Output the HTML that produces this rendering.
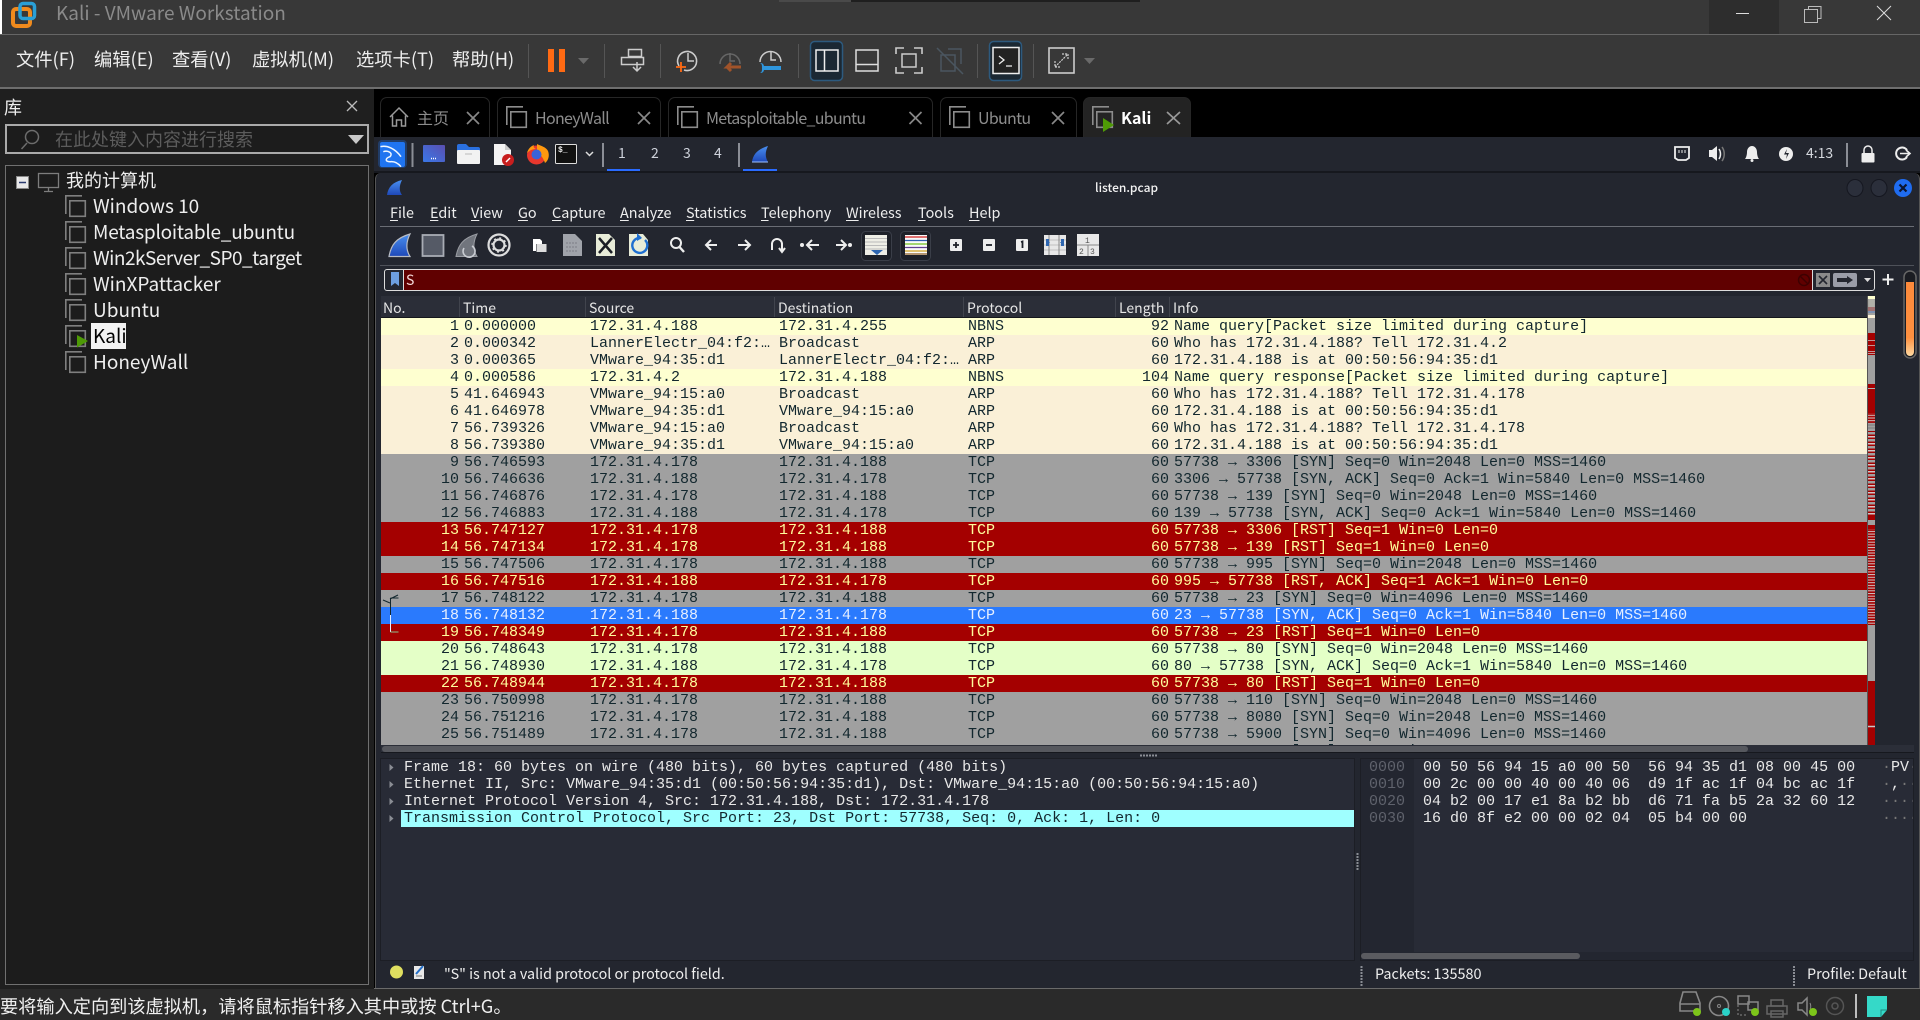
<!DOCTYPE html>
<html><head><meta charset="utf-8"><title>Kali - VMware Workstation</title>
<style>
*{box-sizing:border-box;margin:0;padding:0}
html,body{width:1920px;height:1020px;overflow:hidden;background:#000}
body{position:relative;font-family:"Noto Sans CJK SC","Liberation Sans",sans-serif;color:#eee}
.a{position:absolute}
.t{position:absolute;white-space:nowrap;line-height:1}
#ov{position:absolute;left:0;top:0;z-index:5;pointer-events:none}
.m{font-family:"Liberation Mono",monospace;font-size:15px}
#rows{position:absolute;left:381px;top:318px;width:1486px;height:427px;overflow:hidden;font-family:"Liberation Mono",monospace;font-size:15px;line-height:17px}
.r{position:relative;height:17px;white-space:pre;color:#12272e}
.r span{position:absolute;top:0}
.r span:nth-child(1){right:1408px}
.r span:nth-child(2){left:83px}
.r span:nth-child(3){left:209px}
.r span:nth-child(4){left:398px}
.r span:nth-child(5){left:587px}
.r span:nth-child(6){right:698px}
.r span:nth-child(7){left:793px}
.y{background:#feffd0}.b{background:#faf0d7}.g{background:#a0a0a0}
.d{background:#a40000;color:#fffc9c}.s{background:#2a7afd;color:#e6efff}.l{background:#e4ffc7}
.mi{font-size:14.4px;top:206px;color:#eee}
.mi u{text-decoration-thickness:1px;text-underline-offset:2px}
.hd{font-size:14px;top:301px;color:#e6e6e6}
.dl{position:absolute;left:404px;font-family:"Liberation Mono",monospace;font-size:15px;line-height:17px;color:#e8e8e8;white-space:pre}
.hx{position:absolute;font-family:"Liberation Mono",monospace;font-size:15px;line-height:17px;white-space:pre;color:#e8e8e8}
.tree{font-size:19px;color:#eee}
.menu{font-size:18.3px;top:50px;color:#eee}
.tb{position:absolute;top:97px;height:40px;border:1px solid #262626;border-bottom:none;border-radius:7px 7px 0 0;background:#000}
.tl{font-size:16px;top:109px;color:#8c8c8c;letter-spacing:-.7px}
</style></head><body>

<!-- VMware chrome -->
<div class="a" style="left:0;top:0;width:1920px;height:34px;background:#383838"></div>
<div class="a" style="left:0;top:0;width:2px;height:34px;background:#fff"></div>
<div class="a" style="left:779px;top:0;width:361px;height:2px;background:#1f1f1f"></div>
<div class="a" style="left:779px;top:0;width:72px;height:2px;background:#4a4a4a"></div>
<div class="a" style="left:1709px;top:0;width:70px;height:34px;background:#2d2d2d"></div>
<div class="a" style="left:0;top:34px;width:1920px;height:1px;background:#666"></div>
<div class="a" style="left:0;top:35px;width:1920px;height:52px;background:#383838"></div>
<div class="a" style="left:0;top:87px;width:1920px;height:2px;background:#6e6e6e"></div>
<div class="t" style="left:56px;top:3px;font-size:19px;color:#8a8a8a">Kali - VMware Workstation</div>
<div class="t menu" style="left:16px">文件(F)</div>
<div class="t menu" style="left:94px">编辑(E)</div>
<div class="t menu" style="left:172px">查看(V)</div>
<div class="t menu" style="left:252px">虚拟机(M)</div>
<div class="t menu" style="left:356px">选项卡(T)</div>
<div class="t menu" style="left:452px">帮助(H)</div>

<!-- Left library -->
<div class="a" style="left:0;top:89px;width:374px;height:900px;background:#1f1f1f"></div>
<div class="t" style="left:4px;top:98px;font-size:18px;color:#eee">库</div>
<div class="a" style="left:5px;top:124px;width:364px;height:30px;border:2px solid #aaa;background:#1c1c1c"></div>
<div class="t" style="left:55px;top:130px;font-size:18px;color:#5c5c5c">在此处键入内容进行搜索</div>
<div class="a" style="left:5px;top:165px;width:364px;height:820px;border:1px solid #707070;background:#1c1c1c"></div>
<div class="t tree" style="left:66px;top:171px;font-size:18px">我的计算机</div>
<div class="t tree" style="left:93px;top:196px">Windows 10</div>
<div class="t tree" style="left:93px;top:222px;letter-spacing:-.23px">Metasploitable_ubuntu</div>
<div class="t tree" style="left:93px;top:248px;letter-spacing:-.5px">Win2kServer_SP0_target</div>
<div class="t tree" style="left:93px;top:274px">WinXPattacker</div>
<div class="t tree" style="left:93px;top:300px">Ubuntu</div>
<div class="a" style="left:91px;top:323px;width:35px;height:26px;background:#f2f2f2"></div>
<div class="t tree" style="left:93px;top:326px;color:#000">Kali</div>
<div class="t tree" style="left:93px;top:352px">HoneyWall</div>

<!-- Tabs -->
<div class="tb" style="left:380px;width:110px"></div>
<div class="tb" style="left:497px;width:164px"></div>
<div class="tb" style="left:668px;width:265px"></div>
<div class="tb" style="left:940px;width:137px"></div>
<div class="tb" style="left:1083px;width:108px;background:#232323"></div>
<div class="t tl" style="left:417px;letter-spacing:0">主页</div>
<div class="t tl" style="left:535px">HoneyWall</div>
<div class="t tl" style="left:706px">Metasploitable_ubuntu</div>
<div class="t tl" style="left:978px">Ubuntu</div>
<div class="t tl" style="left:1121px;color:#fff;font-weight:700;letter-spacing:0">Kali</div>

<!-- Kali panel -->
<div class="a" style="left:374px;top:137px;width:1546px;height:36px;background:#23262f"></div>
<div class="a" style="left:374px;top:171px;width:1546px;height:2px;background:#16181e"></div>
<div class="a" style="left:607px;top:169px;width:33px;height:2px;background:#2a6bff"></div>
<div class="a" style="left:743px;top:169px;width:34px;height:2px;background:#2a6bff"></div>
<div class="t" style="left:618px;top:146px;font-size:14px;color:#cfd3dc">1</div>
<div class="t" style="left:651px;top:146px;font-size:14px;color:#cfd3dc">2</div>
<div class="t" style="left:683px;top:146px;font-size:14px;color:#cfd3dc">3</div>
<div class="t" style="left:714px;top:146px;font-size:14px;color:#cfd3dc">4</div>
<div class="t" style="left:1806px;top:146px;font-size:14px;color:#d5d8de">4:13</div>

<!-- Wireshark window -->
<div class="a" style="left:375px;top:173px;width:1545px;height:816px;background:#23262f;border:1px solid #555;border-top:none;border-radius:6px 6px 0 0"></div>
<div class="t" style="left:1095px;top:182px;font-size:12px;color:#f2f2f2;font-weight:500">listen.pcap</div>
<div class="a" style="left:380px;top:226px;width:1534px;height:1px;background:#6a6d75"></div>
<div class="a" style="left:380px;top:265px;width:1534px;height:1px;background:#4e5159"></div>
<div class="t mi" style="left:390px"><u>F</u>ile</div>
<div class="t mi" style="left:430px"><u>E</u>dit</div>
<div class="t mi" style="left:471px"><u>V</u>iew</div>
<div class="t mi" style="left:518px"><u>G</u>o</div>
<div class="t mi" style="left:552px"><u>C</u>apture</div>
<div class="t mi" style="left:620px"><u>A</u>nalyze</div>
<div class="t mi" style="left:686px"><u>S</u>tatistics</div>
<div class="t mi" style="left:761px"><u>T</u>elephony</div>
<div class="t mi" style="left:846px"><u>W</u>ireless</div>
<div class="t mi" style="left:918px"><u>T</u>ools</div>
<div class="t mi" style="left:969px"><u>H</u>elp</div>

<!-- Filter -->
<div class="a" style="left:384px;top:269px;width:1491px;height:22px;border:1px solid #ddd;border-radius:3px;background:#23262f"></div>
<div class="a" style="left:403px;top:270px;width:1410px;height:20px;background:#600000;border-left:1px solid #ddd;border-right:1px solid #ddd"></div>
<div class="t" style="left:406px;top:273px;font-size:14px;color:#f5dada">S</div>

<!-- Packet list header -->
<div class="a" style="left:381px;top:296px;width:1486px;height:22px;background:#2b2e38"></div>
<div class="a" style="left:381px;top:317px;width:1486px;height:1px;background:#15171c"></div>
<div class="a" style="left:459px;top:297px;width:1px;height:20px;background:#41444d"></div>
<div class="a" style="left:585px;top:297px;width:1px;height:20px;background:#41444d"></div>
<div class="a" style="left:774px;top:297px;width:1px;height:20px;background:#41444d"></div>
<div class="a" style="left:963px;top:297px;width:1px;height:20px;background:#41444d"></div>
<div class="a" style="left:1115px;top:297px;width:1px;height:20px;background:#41444d"></div>
<div class="a" style="left:1169px;top:297px;width:1px;height:20px;background:#41444d"></div>
<div class="t hd" style="left:383px">No.</div>
<div class="t hd" style="left:463px">Time</div>
<div class="t hd" style="left:589px">Source</div>
<div class="t hd" style="left:778px">Destination</div>
<div class="t hd" style="left:967px">Protocol</div>
<div class="t hd" style="left:1119px">Length</div>
<div class="t hd" style="left:1173px">Info</div>

<div id="rows">
<div class="r y"><span>1</span><span>0.000000</span><span>172.31.4.188</span><span>172.31.4.255</span><span>NBNS</span><span>92</span><span>Name query[Packet size limited during capture]</span></div>
<div class="r b"><span>2</span><span>0.000342</span><span>LannerElectr_04:f2:…</span><span>Broadcast</span><span>ARP</span><span>60</span><span>Who has 172.31.4.188? Tell 172.31.4.2</span></div>
<div class="r b"><span>3</span><span>0.000365</span><span>VMware_94:35:d1</span><span>LannerElectr_04:f2:…</span><span>ARP</span><span>60</span><span>172.31.4.188 is at 00:50:56:94:35:d1</span></div>
<div class="r y"><span>4</span><span>0.000586</span><span>172.31.4.2</span><span>172.31.4.188</span><span>NBNS</span><span>104</span><span>Name query response[Packet size limited during capture]</span></div>
<div class="r b"><span>5</span><span>41.646943</span><span>VMware_94:15:a0</span><span>Broadcast</span><span>ARP</span><span>60</span><span>Who has 172.31.4.188? Tell 172.31.4.178</span></div>
<div class="r b"><span>6</span><span>41.646978</span><span>VMware_94:35:d1</span><span>VMware_94:15:a0</span><span>ARP</span><span>60</span><span>172.31.4.188 is at 00:50:56:94:35:d1</span></div>
<div class="r b"><span>7</span><span>56.739326</span><span>VMware_94:15:a0</span><span>Broadcast</span><span>ARP</span><span>60</span><span>Who has 172.31.4.188? Tell 172.31.4.178</span></div>
<div class="r b"><span>8</span><span>56.739380</span><span>VMware_94:35:d1</span><span>VMware_94:15:a0</span><span>ARP</span><span>60</span><span>172.31.4.188 is at 00:50:56:94:35:d1</span></div>
<div class="r g"><span>9</span><span>56.746593</span><span>172.31.4.178</span><span>172.31.4.188</span><span>TCP</span><span>60</span><span>57738 → 3306 [SYN] Seq=0 Win=2048 Len=0 MSS=1460</span></div>
<div class="r g"><span>10</span><span>56.746636</span><span>172.31.4.188</span><span>172.31.4.178</span><span>TCP</span><span>60</span><span>3306 → 57738 [SYN, ACK] Seq=0 Ack=1 Win=5840 Len=0 MSS=1460</span></div>
<div class="r g"><span>11</span><span>56.746876</span><span>172.31.4.178</span><span>172.31.4.188</span><span>TCP</span><span>60</span><span>57738 → 139 [SYN] Seq=0 Win=2048 Len=0 MSS=1460</span></div>
<div class="r g"><span>12</span><span>56.746883</span><span>172.31.4.188</span><span>172.31.4.178</span><span>TCP</span><span>60</span><span>139 → 57738 [SYN, ACK] Seq=0 Ack=1 Win=5840 Len=0 MSS=1460</span></div>
<div class="r d"><span>13</span><span>56.747127</span><span>172.31.4.178</span><span>172.31.4.188</span><span>TCP</span><span>60</span><span>57738 → 3306 [RST] Seq=1 Win=0 Len=0</span></div>
<div class="r d"><span>14</span><span>56.747134</span><span>172.31.4.178</span><span>172.31.4.188</span><span>TCP</span><span>60</span><span>57738 → 139 [RST] Seq=1 Win=0 Len=0</span></div>
<div class="r g"><span>15</span><span>56.747506</span><span>172.31.4.178</span><span>172.31.4.188</span><span>TCP</span><span>60</span><span>57738 → 995 [SYN] Seq=0 Win=2048 Len=0 MSS=1460</span></div>
<div class="r d"><span>16</span><span>56.747516</span><span>172.31.4.188</span><span>172.31.4.178</span><span>TCP</span><span>60</span><span>995 → 57738 [RST, ACK] Seq=1 Ack=1 Win=0 Len=0</span></div>
<div class="r g"><span>17</span><span>56.748122</span><span>172.31.4.178</span><span>172.31.4.188</span><span>TCP</span><span>60</span><span>57738 → 23 [SYN] Seq=0 Win=4096 Len=0 MSS=1460</span></div>
<div class="r s"><span>18</span><span>56.748132</span><span>172.31.4.188</span><span>172.31.4.178</span><span>TCP</span><span>60</span><span>23 → 57738 [SYN, ACK] Seq=0 Ack=1 Win=5840 Len=0 MSS=1460</span></div>
<div class="r d"><span>19</span><span>56.748349</span><span>172.31.4.178</span><span>172.31.4.188</span><span>TCP</span><span>60</span><span>57738 → 23 [RST] Seq=1 Win=0 Len=0</span></div>
<div class="r l"><span>20</span><span>56.748643</span><span>172.31.4.178</span><span>172.31.4.188</span><span>TCP</span><span>60</span><span>57738 → 80 [SYN] Seq=0 Win=2048 Len=0 MSS=1460</span></div>
<div class="r l"><span>21</span><span>56.748930</span><span>172.31.4.188</span><span>172.31.4.178</span><span>TCP</span><span>60</span><span>80 → 57738 [SYN, ACK] Seq=0 Ack=1 Win=5840 Len=0 MSS=1460</span></div>
<div class="r d"><span>22</span><span>56.748944</span><span>172.31.4.178</span><span>172.31.4.188</span><span>TCP</span><span>60</span><span>57738 → 80 [RST] Seq=1 Win=0 Len=0</span></div>
<div class="r g"><span>23</span><span>56.750998</span><span>172.31.4.178</span><span>172.31.4.188</span><span>TCP</span><span>60</span><span>57738 → 110 [SYN] Seq=0 Win=2048 Len=0 MSS=1460</span></div>
<div class="r g"><span>24</span><span>56.751216</span><span>172.31.4.178</span><span>172.31.4.188</span><span>TCP</span><span>60</span><span>57738 → 8080 [SYN] Seq=0 Win=2048 Len=0 MSS=1460</span></div>
<div class="r g"><span>25</span><span>56.751489</span><span>172.31.4.178</span><span>172.31.4.188</span><span>TCP</span><span>60</span><span>57738 → 5900 [SYN] Seq=0 Win=4096 Len=0 MSS=1460</span></div>
<div class="r g"><span>26</span><span>56.751497</span><span>172.31.4.188</span><span>172.31.4.178</span><span>TCP</span><span>60</span><span>57738 → 5900 [SYN] Seq=0 Win=4096 Len=0 MSS=1460</span></div>
</div>

<!-- H-scroll + splitter -->
<div class="a" style="left:381px;top:745px;width:1533px;height:7px;background:#2b2e38"></div>
<div class="a" style="left:382px;top:746px;width:1366px;height:6px;border-radius:3px;background:#56585e"></div>
<div class="a" style="left:381px;top:752px;width:1533px;height:1px;background:#16181e"></div>

<!-- Details -->
<div class="a" style="left:380px;top:758px;width:975px;height:203px;background:#282b36;border:1px solid #1c1e25"></div>
<div class="a" style="left:401px;top:810px;width:953px;height:17px;background:#9fffff"></div>
<div class="dl" style="top:759px">Frame 18: 60 bytes on wire (480 bits), 60 bytes captured (480 bits)</div>
<div class="dl" style="top:776px">Ethernet II, Src: VMware_94:35:d1 (00:50:56:94:35:d1), Dst: VMware_94:15:a0 (00:50:56:94:15:a0)</div>
<div class="dl" style="top:793px">Internet Protocol Version 4, Src: 172.31.4.188, Dst: 172.31.4.178</div>
<div class="dl" style="top:810px;color:#12272e">Transmission Control Protocol, Src Port: 23, Dst Port: 57738, Seq: 0, Ack: 1, Len: 0</div>

<!-- Hex -->
<div class="a" style="left:1360px;top:758px;width:554px;height:203px;background:#282b36;border:1px solid #1c1e25;overflow:hidden"></div>
<div class="a" style="left:1361px;top:759px;width:53px;height:193px;background:#232630"></div>
<div class="a" style="left:1361px;top:952px;width:552px;height:8px;background:#232630"></div>
<div class="a" style="left:1361px;top:953px;width:219px;height:6px;border-radius:3px;background:#5a5b60"></div>
<div class="hx" style="left:1369px;top:759px;color:#5f626c">0000
0010
0020
0030</div>
<div class="hx" style="left:1423px;top:759px">00 50 56 94 15 a0 00 50  56 94 35 d1 08 00 45 00
00 2c 00 00 40 00 40 06  d9 1f ac 1f 04 bc ac 1f
04 b2 00 17 e1 8a b2 bb  d6 71 fa b5 2a 32 60 12
16 d0 8f e2 00 00 02 04  05 b4 00 00</div>
<div class="a" style="left:1882px;top:759px;width:31px;height:70px;overflow:hidden"><div class="hx" style="left:0;top:0"><span style="color:#777">·</span>PV<span style="color:#777">·</span>
<span style="color:#777">·</span>,<span style="color:#777">··</span>
<span style="color:#777">····</span>
<span style="color:#777">····</span></div></div>

<!-- WS status -->
<div class="t" style="left:444px;top:967px;font-size:14.3px;color:#eee">"S" is not a valid protocol or protocol field.</div>
<div class="t" style="left:1375px;top:967px;font-size:14.4px;color:#eee">Packets: 135580</div>
<div class="t" style="left:1807px;top:967px;font-size:14.4px;color:#eee">Profile: Default</div>

<!-- Bottom status -->
<div class="a" style="left:0;top:989px;width:1920px;height:31px;background:#2a2a2a"></div>
<div class="a" style="left:374px;top:988px;width:1546px;height:1px;background:#6a6a6a"></div>
<div class="t" style="left:0;top:997px;font-size:18.2px;color:#f0f0f0">要将输入定向到该虚拟机，请将鼠标指针移入其中或按 Ctrl+G。</div>

<svg id="ov" width="1920" height="1020" viewBox="0 0 1920 1020" fill="none">
<defs>
<g id="vm" stroke-width="1.6"><path d="M0.8 19V0.8H17" /><rect x="4.8" y="5.8" width="15.5" height="15.5"/></g>
<pattern id="st" width="7" height="2.7" patternUnits="userSpaceOnUse"><rect width="7" height="2.7" fill="#a40000"/><rect y="0" width="7" height="1" fill="#d0c8c8"/></pattern>
<pattern id="st2" width="7" height="7" patternUnits="userSpaceOnUse"><rect width="7" height="7" fill="#a40000"/><rect y="0" width="7" height="1.5" fill="#d0c8c8"/><rect y="3" width="7" height="2.5" fill="#a0a0a0"/></pattern>
<linearGradient id="fin" x1="0" y1="0" x2="0" y2="1"><stop offset="0" stop-color="#4a90f0"/><stop offset="1" stop-color="#1e48b8"/></linearGradient>
<linearGradient id="org" x1="0" y1="0" x2="0" y2="1"><stop offset="0" stop-color="#fd8a3b"/><stop offset=".75" stop-color="#fe9040"/><stop offset="1" stop-color="#ffd9a0"/></linearGradient>
<linearGradient id="pur" x1="1" y1="0" x2="0" y2="1"><stop offset="0" stop-color="#5a4fb0"/><stop offset="1" stop-color="#3a78e8"/></linearGradient>
</defs>

<!-- VMware logo -->
<rect x="13" y="9" width="17" height="17" rx="3" stroke="#f08a1d" stroke-width="4"/>
<rect x="20" y="3.500" width="14.500" height="15" rx="3" stroke="#2a9fd6" stroke-width="3.500"/>
<!-- window controls -->
<path d="M1736 13.500h13" stroke="#ddd"/>
<rect x="1804.500" y="9.500" width="13" height="13" stroke="#bbb"/><path d="M1808.500 9V6.500h12.500V18.500h-3" stroke="#bbb"/>
<path d="M1877 6l14 14M1891 6l-14 14" stroke="#ddd"/>

<!-- VMware toolbar -->
<path d="M528.500 44v34M604.500 44v34M660.500 44v34M798.500 44v34M977.500 44v34M1033.500 44v34" stroke="#555"/>
<rect x="548" y="49" width="6" height="23" fill="#ff6a13"/><rect x="559" y="49" width="6" height="23" fill="#ff6a13"/>
<path d="M578 58h11l-5.500 6z" fill="#6a6a6a"/>
<rect x="628.500" y="49.500" width="13" height="7" stroke="#ccc" stroke-width="1.500"/><rect x="621.500" y="57.500" width="22" height="7" stroke="#ccc" stroke-width="1.500"/>
<path d="M637 62v9m-4-4l4 4 4-4" stroke="#ccc" stroke-width="1.500"/>
<path d="M679 66a9.500 9.500 0 1 1 5 4" stroke="#ccc" stroke-width="1.600"/><path d="M688 53v8h6" stroke="#ccc" stroke-width="1.500"/><path d="M676 67h10M681 62v10" stroke="#ff6a13" stroke-width="1.800"/>
<path d="M720 64a10 10 0 1 1 20 0" stroke="#666" stroke-width="1.500"/><path d="M730 53v8h5" stroke="#666" stroke-width="1.500"/><path d="M741 67h-14l4-4m-4 4l4 4" stroke="#a0532a" stroke-width="3"/>
<path d="M760 62a10.500 10.500 0 1 1 21 0" stroke="#ccc" stroke-width="1.500"/><path d="M771 52v8h5" stroke="#ccc" stroke-width="1.500"/><path d="M760 63a3.500 3.500 0 0 1 4 3h17v4h-17a3.500 3.500 0 0 1-4 3c2-1 2-2 2-5s0-4-2-5z" fill="#2f96dd"/>
<rect x="810.500" y="41.500" width="32" height="39" rx="4" fill="#1b2833" stroke="#2d5a7e" stroke-width="1.500"/>
<rect x="816" y="50" width="22" height="21" stroke="#eee" stroke-width="1.500"/><path d="M824.500 50v21" stroke="#eee" stroke-width="1.500"/>
<rect x="856" y="50" width="22" height="21" stroke="#ddd" stroke-width="1.500"/><path d="M856 64.500h22" stroke="#ddd" stroke-width="1.500"/>
<path d="M896 54v-6h8M914 48h8v6M922 67v6h-8M904 73h-8v-6" stroke="#ccc" stroke-width="1.600"/><rect x="902" y="54" width="14" height="13" stroke="#ccc" stroke-width="1.500"/>
<path d="M937 48l26 26" stroke="#4a5660" stroke-width="1.500"/><rect x="941" y="55" width="14" height="16" stroke="#4a5660" stroke-width="1.500"/><path d="M948 49h13v15" stroke="#4a5660" stroke-width="1.500"/>
<rect x="989.500" y="41.500" width="32" height="39" rx="4" fill="#1b2833" stroke="#2d5a7e" stroke-width="1.500"/>
<rect x="993" y="47.500" width="26" height="26" fill="#222" stroke="#eee" stroke-width="1.500"/><path d="M999 56l5 4-5 4M1006 66h6" stroke="#eee" stroke-width="1.300"/>
<rect x="1049" y="48" width="25" height="25" stroke="#ccc" stroke-width="1.600"/><path d="M1055 67l13-13M1062 54h6v6M1055 61v6h6" stroke="#ccc" stroke-width="1.200" stroke-dasharray="2 1"/>
<path d="M1084 58h11l-5.500 6z" fill="#6a6a6a"/>

<!-- library close, search -->
<path d="M347 101l10 10M357 101l-10 10" stroke="#bbb" stroke-width="1.300"/>
<circle cx="32" cy="137" r="6.500" stroke="#6d6d6d" stroke-width="1.500"/><path d="M27 143l-5.500 6" stroke="#6d6d6d" stroke-width="1.500"/>
<path d="M348 135h16l-8 9z" fill="#c8c8c8"/>
<rect x="16.500" y="176.500" width="12" height="12" fill="#e8e8e8" stroke="#888"/><path d="M19 182.500h7" stroke="#2a3a6e" stroke-width="1.500"/>
<rect x="38.500" y="173.500" width="20" height="14" stroke="#7d7d7d" stroke-width="1.300"/><path d="M48.500 188v3M44 191.500h9" stroke="#7d7d7d" stroke-width="1.300"/>
<!-- tree icons -->
<use href="#vm" x="65" y="195" stroke="#7f7f7f"/><use href="#vm" x="65" y="221" stroke="#7f7f7f"/>
<use href="#vm" x="65" y="247" stroke="#7f7f7f"/><use href="#vm" x="65" y="273" stroke="#7f7f7f"/>
<use href="#vm" x="65" y="299" stroke="#7f7f7f"/><use href="#vm" x="65" y="325" stroke="#7f7f7f"/>
<use href="#vm" x="65" y="351" stroke="#7f7f7f"/>
<path d="M77 335l11 6-11 6.500z" fill="#4e9a06"/>

<!-- tab icons -->
<path d="M390 117l9-9 9 9M392.500 115.500V126h4v-6h5v6h4v-10.500" stroke="#999" stroke-width="1.500"/>
<path d="M467 112l12 12M479 112l-12 12" stroke="#888" stroke-width="1.700"/>
<use href="#vm" x="506" y="106" stroke="#8c8c8c"/>
<path d="M638 112l12 12M650 112l-12 12" stroke="#888" stroke-width="1.700"/>
<use href="#vm" x="677" y="106" stroke="#8c8c8c"/>
<path d="M909.500 112l12 12M921.500 112l-12 12" stroke="#888" stroke-width="1.700"/>
<use href="#vm" x="949" y="106" stroke="#8c8c8c"/>
<path d="M1052 112l12 12M1064 112l-12 12" stroke="#888" stroke-width="1.700"/>
<use href="#vm" x="1092" y="106" stroke="#8c8c8c"/>
<path d="M1103 119l11 7-11 7z" fill="#4e9a06" transform="translate(0,-1)"/>
<path d="M1167 112l13 12M1180 112l-13 12" stroke="#999" stroke-width="1.700"/>

<!-- Kali panel -->
<rect x="378" y="140" width="29" height="28" rx="4" fill="#1f74f0" opacity=".3"/>
<rect x="380" y="142" width="25" height="25" rx="2" fill="#1f74f0"/>
<path d="M380.500 146.700C386.700 145 395 148.300 401 156.700M383.300 151.700C388.300 150 393.300 153.300 390 156.700C385 158.300 385 161.700 390 161.700C395 161 398.300 163.300 401 166.700" stroke="#eef6ff" stroke-width="1.500"/>
<path d="M412.500 143v24M603 143v24M739 143v24M1847 143v24" stroke="#8b8e96" stroke-width="2"/>
<rect x="423" y="145" width="22" height="17" rx="1" fill="url(#pur)"/><path d="M431 158.500h5" stroke="#fff" stroke-dasharray="1 1" stroke-width="1.500"/>
<path d="M457 146a2 2 0 0 1 2-2h7l3 3h9a2 2 0 0 1 2 2v3h-23z" fill="#2a70e0"/><rect x="457" y="150" width="23" height="14" rx="1" fill="#f2f2f2"/><path d="M465 154h7" stroke="#bbb"/>
<path d="M494 144h11l6 6v15h-17z" fill="#f4f4f4"/><path d="M505 144v6h6" fill="#ccc"/><circle cx="508" cy="160" r="6" fill="#c81e1e"/><path d="M506 162l4-4" stroke="#fff" stroke-width="1.500"/>
<circle cx="536.500" cy="155" r="9.500" fill="#e8372d"/><path d="M537 144c4 2 9 3 11 7 2 5 0 10-3 12-2-6-5-9-8-9z" fill="#ff980e"/><circle cx="536.500" cy="154.500" r="5" fill="#3a62d8"/><path d="M527 153c1-4 4-7 7-8-1 2 0 3 2 4-3 0-6 1-9 4z" fill="#ff980e"/>
<rect x="555.500" y="144.500" width="21" height="19" rx="1" fill="#111" stroke="#ddd"/><text x="558" y="152" font-family="Liberation Mono" font-size="8" font-weight="700" fill="#eee">$_</text>
<path d="M586 152l3.500 3.500 3.500-3.500" stroke="#ddd" stroke-width="1.500"/>
<path d="M752 162C753 154 758 149 768 146C765 152 765 157 768 162Z" fill="url(#fin)"/><path d="M752 162h16" stroke="#9cc0ff"/>
<path d="M1675 147h14v11l-3 2h-8l-3-2z" fill="#23262f" stroke="#eee" stroke-width="1.800"/><path d="M1679 150v3M1682 150v3M1685 150v3" stroke="#eee"/>
<path d="M1709 150h3l5-4v15l-5-4h-3z" fill="#eee"/><path d="M1719 149c2 3 2 7 0 10" stroke="#eee" stroke-width="1.500"/><path d="M1722 147c3 4 3 10 0 14" stroke="#777" stroke-width="1.500"/>
<path d="M1752 146c-3 0-5 3-5 6 0 3-1 6-2 7h14c-1-1-2-4-2-7 0-3-2-6-5-6z" fill="#eee"/><circle cx="1752" cy="160.500" r="1.500" fill="#eee"/>
<circle cx="1786" cy="154" r="7" fill="#eee"/><path d="M1787 149l-3 5.500h3l-1 4.500 3-6h-3z" fill="#23262f"/>
<rect x="1861.500" y="153" width="13" height="9.500" rx="1" fill="#eee"/><path d="M1864 153v-3a4 4 0 0 1 8 0v3" stroke="#eee" stroke-width="1.500"/>
<path d="M1907 150a6 6 0 1 0 0 7" stroke="#eee" stroke-width="2"/><path d="M1900 153.500h9M1906 150l4 3.500-4 3.500" stroke="#eee" stroke-width="1.600"/>

<!-- WS window -->
<path d="M387 195C388 187 393 182 402 180C399 186 399 191 402 195Z" fill="url(#fin)"/>
<ellipse cx="1855" cy="188" rx="8" ry="8.500" fill="#2b2f3b" stroke="#151720"/>
<ellipse cx="1879" cy="188" rx="8" ry="8.500" fill="#2b2f3b" stroke="#151720"/>
<ellipse cx="1903" cy="188" rx="9" ry="9" fill="#1f6cf0"/><path d="M1899.500 184.500l7 7M1906.500 184.500l-7 7" stroke="#0b1530" stroke-width="2.200"/>

<!-- WS toolbar -->
<path d="M389 256.500C391 245 396 238 410 234C406 242 406 250 410 256.500Z" fill="url(#fin)" stroke="#b8bcc4" stroke-width="1.200"/>
<rect x="422.500" y="235" width="21" height="21" fill="#555a66" stroke="#a8acb4" stroke-width="1.800"/>
<path d="M456 256.500C458 245 463 238 477 234C473 242 473 250 477 256.500Z" fill="#71757d" stroke="#9a9da3"/><path d="M472 246a6 6 0 1 1-8 2" stroke="#c9ccd2" stroke-width="1.600"/>
<circle cx="499" cy="245" r="10.500" stroke="#ddd" stroke-width="2.200"/><circle cx="499" cy="245" r="5.500" stroke="#ddd" stroke-width="2.200"/><circle cx="499" cy="245" r="7" stroke="#ddd" stroke-width="1.500" stroke-dasharray="2 3.500"/>
<path d="M533 239h7l2 2v3h-6v7h-3z" fill="#fff"/><path d="M536.500 244h10v8h-10z" fill="#ddd"/>
<path d="M563 234h12l7 7v15h-19z" fill="#a0a3aa"/><path d="M566 243h12M566 247h12M566 251h12" stroke="#7c7e85" stroke-dasharray="2 1"/>
<path d="M596 234h13l6 6v16h-19z" fill="#e8ecd8"/><path d="M599 238l13 15M612 238l-13 15" stroke="#1a1d24" stroke-width="2.500"/>
<path d="M629 234h14l5 6v16h-19z" fill="#e8ecd8"/><path d="M645 240a7.500 7.500 0 1 1-4-2" stroke="#1f6fd0" stroke-width="2.400"/><path d="M637 233l5 5-5 3z" fill="#1f6fd0"/>
<circle cx="676" cy="243" r="5" stroke="#eee" stroke-width="2"/><path d="M679.500 247l4.500 5" stroke="#eee" stroke-width="2.400"/>
<path d="M717 245h-10M711 240l-5 5 5 5" stroke="#eee" stroke-width="2"/>
<path d="M738 245h11M745 240l5 5-5 5" stroke="#eee" stroke-width="2"/>
<path d="M772 250v-6a5 5 0 0 1 10 0v7M779 248l3 4 3-4" stroke="#eee" stroke-width="2"/>
<circle cx="802" cy="245" r="2" fill="#eee"/><path d="M819 245h-12M812 240l-5 5 5 5" stroke="#eee" stroke-width="2"/>
<circle cx="850" cy="245" r="2" fill="#eee"/><path d="M836 245h10M841 240l5 5-5 5" stroke="#eee" stroke-width="2"/>
<rect x="861.500" y="231.500" width="30" height="29" rx="4" fill="#1d2028" stroke="#3a3e48"/>
<rect x="865" y="235" width="22" height="20" fill="#eeeee6"/><path d="M865 238.500h22M865 242h22M865 245.500h22M865 249h22" stroke="#bbb"/><path d="M871 250h12l-6 5z" fill="#2e66b0"/>
<rect x="900.500" y="231.500" width="30" height="29" rx="4" fill="#1d2028" stroke="#3a3e48"/>
<rect x="905" y="235" width="22" height="20" fill="#fafafa"/><path d="M905 237h22" stroke="#d02020" stroke-width="1.300"/><path d="M905 240.500h22" stroke="#3060b0" stroke-width="1.300"/><path d="M905 244h22" stroke="#70c020" stroke-width="1.300"/><path d="M905 247.500h22" stroke="#604090" stroke-width="1.300"/><path d="M905 251h22" stroke="#d0a020" stroke-width="1.300"/><path d="M905 254h22" stroke="#8a5a20" stroke-width="1.300"/>
<rect x="950" y="239" width="12" height="12" rx="1" fill="#eee"/><path d="M953 245h6M956 242v6" stroke="#1d2028" stroke-width="1.800"/>
<rect x="983" y="239" width="12" height="12" rx="1" fill="#eee"/><path d="M986 245h6" stroke="#1d2028" stroke-width="1.800"/>
<rect x="1016" y="239" width="12" height="12" rx="1" fill="#eee"/><path d="M1021 242l1.500-.5V248" stroke="#1d2028" stroke-width="1.800"/>
<rect x="1044" y="235" width="22" height="20" fill="#e8e8e8"/><path d="M1044 240h22M1044 245h22M1044 250h22" stroke="#c0c0c0"/><path d="M1049 235v20M1059 235v20" stroke="#888"/><path d="M1046 240l4 2.500-4 3zM1064 240l-4 2.500 4 3z" fill="#2e66b0"/><rect x="1046" y="239" width="3" height="7" fill="#2e66b0"/><rect x="1061" y="239" width="3" height="7" fill="#2e66b0"/>
<rect x="1077" y="234" width="22" height="22" fill="#e8e8e8"/><path d="M1077 245h22M1088 245v11" stroke="#888"/>
<text x="1085" y="243" font-family="Liberation Mono" font-size="8" fill="#555">1</text><text x="1079" y="254" font-family="Liberation Mono" font-size="8" fill="#555">2</text><text x="1090" y="254" font-family="Liberation Mono" font-size="8" fill="#555">3</text>

<!-- filter icons -->
<path d="M391 272h8v14l-4-3-4 3z" fill="#6d9fe0"/>
<circle cx="1804" cy="280" r="5.500" stroke="#3e0000" stroke-width="1.500"/><path d="M1800 276l8 8" stroke="#3e0000" stroke-width="1.500"/>
<rect x="1816" y="273" width="14" height="14" fill="#8a8a8a"/><path d="M1819 276l8 8M1827 276l-8 8" stroke="#23262f" stroke-width="1.600"/>
<rect x="1833" y="273" width="24" height="14" rx="2" fill="#9a9da8"/><path d="M1837 278h10v-2l6 4-6 4v-2h-10z" fill="#23262f"/>
<path d="M1864 278h7l-3.500 4z" fill="#ddd"/>
<path d="M1888 274v11M1882.500 279.500h11" stroke="#eee" stroke-width="2"/>

<!-- orange scrollbar -->
<rect x="1904" y="271" width="12" height="87" rx="6" fill="#1a1c22" stroke="#666" stroke-width="1.500"/>
<path d="M1906 282h8v70a4 4 0 0 1-8 0z" fill="url(#org)"/>

<!-- minimap -->
<g transform="translate(1868,296)">
<rect width="7" height="449" fill="#a0a0a0"/>
<rect width="7" height="3" fill="#feffd0"/><rect y="3" x="0.500" width="6" height="8" fill="#b0b0a8"/>
<path d="M0 12h7M0 14h7" stroke="#a04040"/><path d="M0 16h7" stroke="#5a80c0"/><rect y="19" width="7" height="3" fill="#faf0d7"/>
<rect y="37" width="7" height="22" fill="#a40000"/><path d="M0 44.500h7M0 49.500h7M0 55.500h7M0 57.500h7" stroke="#c8c8c8" stroke-width=".7"/>
<rect y="88" width="7" height="29" fill="#a40000"/><path d="M0 92.500h7" stroke="#b0b0b0"/>
<rect y="117" width="7" height="10" fill="url(#st)"/><rect y="135" width="7" height="6" fill="url(#st2)"/>
<path d="M0 129h7M0 132h7" stroke="#7a7a7a"/>
<rect y="141" width="7" height="78" fill="url(#st2)"/>
<rect y="219" width="7" height="5" fill="#a40000"/>
<rect y="229" width="7" height="4" fill="#a40000"/>
<rect y="233" width="7" height="96" fill="url(#st)"/>
<rect y="385" width="7" height="64" fill="#a40000"/><path d="M0 430.500h7" stroke="#c8c8c8" stroke-width="1.500"/>
</g>
<path d="M1867.500 296v449" stroke="#555"/>

<!-- related packet marks -->
<path d="M390.500 598v17" stroke="#12272e"/>
<path d="M390.500 598h8M383 600l7 3M390 599l8-4" stroke="#12272e"/>
<path d="M390.500 615v17" stroke="#e6efff"/><path d="M390.500 632h8" stroke="#8bbb8b"/>

<!-- splitters -->
<path d="M1140 755.500h17" stroke="#8a8d94" stroke-dasharray="2 1" stroke-width="2" />
<path d="M1357.500 853v18" stroke="#8a8d94" stroke-width="2" stroke-dasharray="2 1"/>
<path d="M1361.500 966v20" stroke="#8a8d94" stroke-width="2" stroke-dasharray="2 1"/>
<path d="M1794 966v20" stroke="#8a8d94" stroke-width="2" stroke-dasharray="2 1"/>

<!-- detail arrows -->
<path d="M389.500 764v7l4-3.500zM389.500 781v7l4-3.500zM389.500 798v7l4-3.500zM389.500 815v7l4-3.500z" fill="#8a8d94"/>

<!-- WS status icons -->
<circle cx="396.500" cy="972" r="6.500" fill="#dfdf60"/>
<path d="M414 966h10v13h-10z" fill="#e8e8e8"/><path d="M416 974l7-8" stroke="#2670c8" stroke-width="2"/><path d="M416 976h6" stroke="#777"/>

<!-- VMware status icons -->
<path d="M1680 1003l3-11h13l4 11v8h-20z" stroke="#888" stroke-width="1.600"/><path d="M1680 1004h20" stroke="#888" stroke-width="1.600"/><circle cx="1697" cy="1012" r="4" fill="#7dc51a"/>
<circle cx="1719" cy="1006" r="9.500" stroke="#888" stroke-width="1.600"/><circle cx="1719" cy="1006" r="1.500" stroke="#888"/><circle cx="1726" cy="1012" r="4" fill="#2ad2c9"/>
<rect x="1738" y="996" width="11" height="8" stroke="#888" stroke-width="1.500"/><rect x="1748" y="1002" width="10" height="8" stroke="#888" stroke-width="1.500"/><path d="M1738 1005v10h9" stroke="#888" stroke-dasharray="2 2"/><circle cx="1755" cy="1012" r="4" fill="#7dc51a"/>
<rect x="1771" y="1000" width="12" height="6" stroke="#666" stroke-width="1.500"/><rect x="1767" y="1006" width="20" height="8" stroke="#666" stroke-width="1.500"/><rect x="1771" y="1011" width="12" height="6" stroke="#666" stroke-width="1.500"/>
<path d="M1798 1003h4l5-5v17l-5-5h-4z" stroke="#888" stroke-width="1.500"/><path d="M1810 1003c1 2 1 5 0 6" stroke="#888"/><circle cx="1813" cy="1012" r="4" fill="#7dc51a"/>
<circle cx="1835" cy="1006" r="8.500" stroke="#555" stroke-width="1.500"/><circle cx="1835" cy="1006" r="3" stroke="#555" stroke-width="1.500"/>
<path d="M1856 994v24" stroke="#eee" stroke-width="1.500"/>
<path d="M1867 996h20v14l-6 7h-14z" fill="#35d9c8"/><path d="M1881 1017v-7h6" stroke="#1f8b80"/>
</svg>
</body></html>
